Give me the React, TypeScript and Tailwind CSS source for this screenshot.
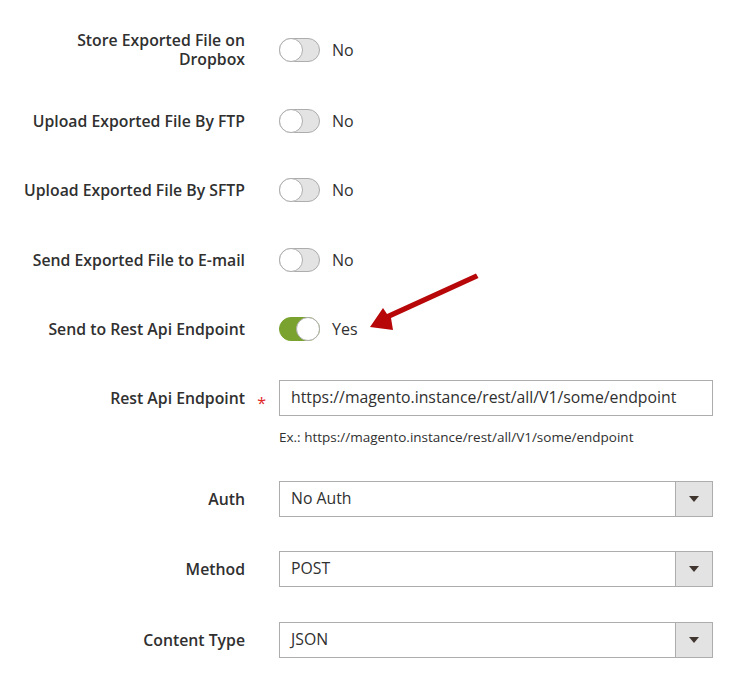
export default function App() {
  return (
    <div className="w-[747px] h-[682px] bg-white relative overflow-hidden text-[#303030]" style={{ fontFamily: '"Open Sans", sans-serif' }}>
      <div className="flex flex-col pt-[31px]">
        <ToggleRow label={<>Store Exported File on<br />Dropbox</>} h="h-[38px]" mb="mb-[34px]" />
        <ToggleRow label="Upload Exported File By FTP" mb="mb-[33px]" />
        <ToggleRow label="Upload Exported File By SFTP" mb="mb-[34px]" />
        <ToggleRow label="Send Exported File to E-mail" mb="mb-[33px]" />
        <ToggleRow label="Send to Rest Api Endpoint" on mb="mb-[33px]" />

        <div className="flex items-center h-[36px]">
          <Label required>Rest Api Endpoint</Label>
          <div className="w-[434px] h-[36px] border border-[#adadad] flex items-center px-[11px] text-[15.8px]">
            https://magento.instance/rest/all/V1/some/endpoint
          </div>
        </div>
        <div className="flex mt-[12px] mb-[35px]">
          <div className="w-[279px] shrink-0" />
          <div className="text-[13.5px] leading-[18px]">Ex.: https://magento.instance/rest/all/V1/some/endpoint</div>
        </div>

        <SelectRow label="Auth" value="No Auth" mb="mb-[34px]" />
        <SelectRow label="Method" value="POST" mb="mb-[35px]" />
        <SelectRow label="Content Type" value="JSON" mb="" />
      </div>

      <svg className="absolute left-0 top-0" width="747" height="682" viewBox="0 0 747 682">
        <path d="M476 273.5 L478.5 278 L391 318 L393 330 L370 327 L383 308 L387 314 Z" fill="#b80709" />
      </svg>
    </div>
  )
}

function Label({ children, required }: { children: React.ReactNode; required?: boolean }) {
  return (
    <div className="w-[279px] shrink-0 flex justify-end items-center pr-[34px] relative">
      <div className="text-right text-[15.8px] font-semibold leading-[19px]">{children}</div>
      {required && <span className="absolute right-[13px] top-[2px] text-[#e22626] text-[16px]">*</span>}
    </div>
  )
}

function ToggleRow({ label, on, h = 'h-[36px]', mb }: { label: React.ReactNode; on?: boolean; h?: string; mb: string }) {
  return (
    <div className={`flex items-center ${h} ${mb}`}>
      <Label>{label}</Label>
      <div className="flex items-center">
        {on ? (
          <div className="w-[41px] h-[24px] rounded-full bg-[#79a22e] border border-[#79a22e] relative">
            <div className="absolute right-[-1px] top-[-1px] w-[24px] h-[24px] rounded-full bg-white border border-[#adadad]" />
          </div>
        ) : (
          <div className="w-[41px] h-[24px] rounded-full bg-[#e3e3e3] border border-[#adadad] relative">
            <div className="absolute left-[-1px] top-[-1px] w-[24px] h-[24px] rounded-full bg-white border border-[#adadad]" />
          </div>
        )}
        <span className="ml-[12px] text-[16px]">{on ? 'Yes' : 'No'}</span>
      </div>
    </div>
  )
}

function SelectRow({ label, value, mb }: { label: string; value: string; mb: string }) {
  return (
    <div className={`flex items-center h-[36px] ${mb}`}>
      <Label>{label}</Label>
      <div className="w-[434px] h-[36px] border border-[#adadad] flex items-stretch">
        <div className="flex-1 flex items-center px-[11px] text-[15.8px]">{value}</div>
        <div className="w-[37px] border-l border-[#adadad] bg-[#e3e3e3] flex items-center justify-center">
          <svg width="10" height="6" viewBox="0 0 10 6"><path d="M0 0 H10 L5 6 Z" fill="#41362f" /></svg>
        </div>
      </div>
    </div>
  )
}
